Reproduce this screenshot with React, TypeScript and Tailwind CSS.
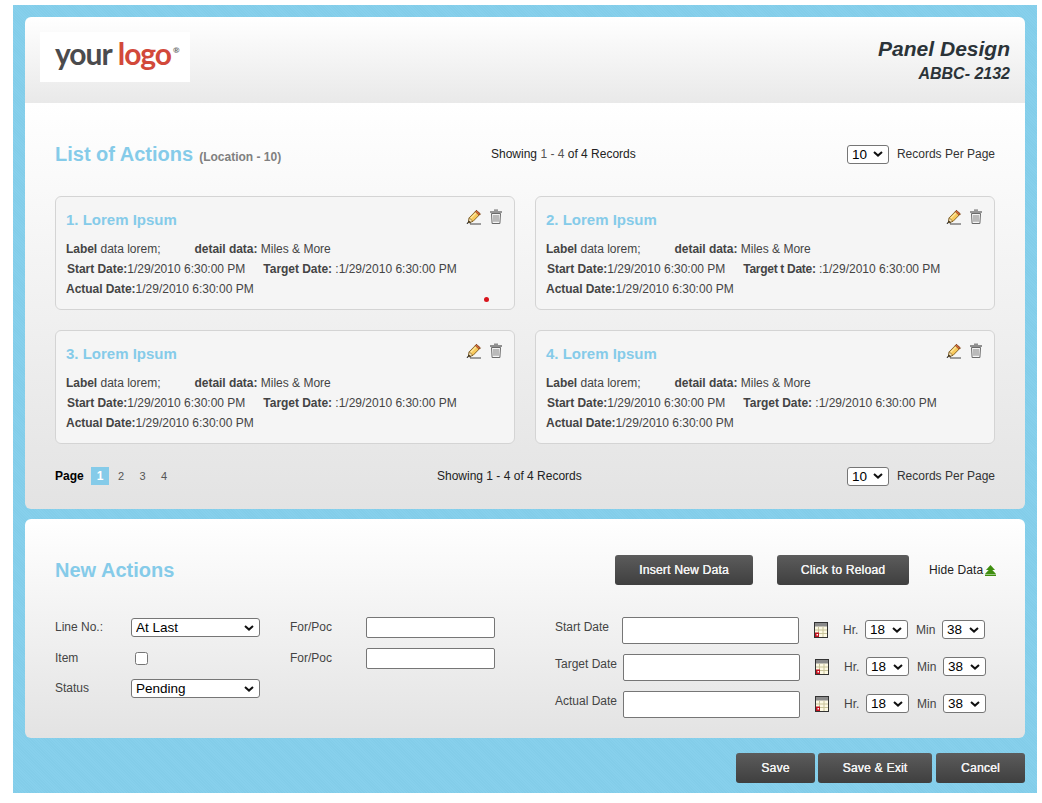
import React from "react";

const Pencil = () => (
  <svg width="16" height="16" viewBox="0 0 16 16" className="block">
    <path d="M4 15H15" stroke="#444" strokeWidth="1" fill="none" />
    <path d="M1 14.6c.8-1.2 2.6-1.6 3.6-.4" stroke="#111" strokeWidth="1.2" fill="none" />
    <path d="M3.2 8.8 10.4 1.4l3.9 3.5-7.3 7.5-4.6 1.1z" fill="#f8c95c" stroke="#6b4a12" strokeWidth="0.8" strokeLinejoin="round" />
    <path d="M4.4 9.6 11.6 2.4" stroke="#fbe7a6" strokeWidth="1.2" fill="none" />
    <path d="M10.4 1.4l3.9 3.5-1.3 1.3-3.8-3.6z" fill="#d9663a" stroke="#6b2f12" strokeWidth="0.6" />
    <path d="M3.2 8.8l3.8 3.6-4.6 1.1z" fill="#f7e2b5" stroke="#6b4a12" strokeWidth="0.6" />
    <path d="M2.2 13.6l.5-2 1.5 1.5z" fill="#111" />
  </svg>
);

const Trash = () => (
  <svg width="14" height="15" viewBox="0 0 14 15" className="block">
    <path d="M5 1.2h4" stroke="#777" strokeWidth="1.2" fill="none" />
    <path d="M1 3h12" stroke="#777" strokeWidth="1.6" fill="none" />
    <path d="M2.5 4.5h9l-.6 10H3.1z" fill="#f4f4f4" stroke="#6a6a6a" strokeWidth="1" strokeLinejoin="round" />
    <path d="M5 6v6.8M7 6v6.8M9 6v6.8" stroke="#808080" strokeWidth="1" fill="none" />
  </svg>
);

const Calendar = () => (
  <svg width="14" height="16" viewBox="0 0 14 16" className="block">
    <rect x="0.5" y="0.5" width="13" height="15" fill="#fdf9e3" stroke="#333" />
    <rect x="1" y="1" width="12" height="3.5" fill="#8a8a8a" />
    <path d="M4.5 5v10M9 5v10M1 8h12M1 11.5h12" stroke="#c9c49a" strokeWidth="1" fill="none" />
    <rect x="1" y="10.5" width="4" height="4.5" fill="#c1121f" />
    <rect x="2.5" y="12" width="1.5" height="1.5" fill="#fff" />
  </svg>
);

const Select = ({ value, className }: { value: string; className: string }) => (
  <span className={`relative block ${className}`}>
    <select
      defaultValue={value}
      className="block w-full h-full appearance-none border border-[#767676] rounded-[3px] bg-white text-[13.5px] leading-[17px] py-0 text-black pl-[4px]"
    >
      <option>{value}</option>
    </select>
    <svg width="10" height="6" viewBox="0 0 10 6" className="absolute right-[6px] top-1/2 -mt-[3px] pointer-events-none">
      <path d="M1 1l4 3.6L9 1" stroke="#111" strokeWidth="2" fill="none" />
    </svg>
  </span>
);

const Btn = ({ children, className }: { children: React.ReactNode; className: string }) => (
  <button className={`h-[30px] rounded-[3px] bg-gradient-to-b from-[#5c5c5c] to-[#3f3f3f] text-[#f2f2f2] text-[12px] tracking-[0.25px] [text-shadow:0.3px_0_0_#fff] text-center ${className}`}>
    {children}
  </button>
);

const PerPage = () => (
  <div className="flex items-center ml-auto">
    <Select value="10" className="w-[42px] h-[19px]" />
    <span className="ml-[8px] text-[12px] text-[#333]">Records Per Page</span>
  </div>
);

type CardData = { n: number; target: React.ReactNode };

const B = ({ children, className = "" }: { children: React.ReactNode; className?: string }) => (
  <b className={`tracking-[-0.04px] ${className}`}>{children}</b>
);

const Card = ({ d, dot }: { d: CardData; dot?: boolean }) => (
  <div className="relative h-[114px] rounded-[6px] border border-[#d4d4d4] bg-[#f5f5f5] px-[10px] pt-[14px]">
    <div className="flex justify-between h-[18px]">
      <h3 className="text-[15px] leading-[18px] font-bold text-[#85cbe9]">{d.n}. Lorem Ipsum</h3>
      <div className="flex gap-[7px] -mt-[2px] mr-[1px]">
        <Pencil />
        <Trash />
      </div>
    </div>
    <div className="mt-[10px] text-[12px] leading-[20px] text-[#444] whitespace-nowrap">
      <div>
        <B>Label</B> data lorem;<B className="ml-[34px]">detail data:</B> Miles &amp; More
      </div>
      <div className="ml-[1px]">
        <B>Start Date:</B>1/29/2010 6:30:00 PM<span className="ml-[18px]">{d.target}</span> :1/29/2010 6:30:00 PM
      </div>
      <div>
        <B>Actual Date:</B>1/29/2010 6:30:00 PM
      </div>
    </div>
    {dot && <span className="absolute left-[428px] top-[100px] w-[5px] h-[5px] rounded-full bg-[#d8141c]" />}
  </div>
);

const cards: CardData[] = [
  { n: 1, target: <B>Target Date:</B> },
  { n: 2, target: <b className="tracking-[-0.3px]">Target t Date:</b> },
  { n: 3, target: <B>Target Date:</B> },
  { n: 4, target: <B>Target Date:</B> },
];

const DateRow = ({ label, inputMl }: { label: string; inputMl: string }) => (
  <div className="flex items-center h-[27px]">
    <span className="w-[67px] text-[12px] text-[#444] -mt-[8px] whitespace-nowrap">{label}</span>
    <input className={`w-[177px] h-[27px] border border-[#767676] rounded-[2px] bg-white ${inputMl}`} />
    <span className="ml-[15px] -mt-[2px]">
      <Calendar />
    </span>
    <span className="ml-[15px] w-[22px] text-[12px] text-[#444] -mt-[2px]">Hr.</span>
    <Select value="18" className="w-[43px] h-[19px] -mt-[2px]" />
    <span className="ml-[8px] w-[26px] text-[12px] text-[#444] -mt-[2px]">Min</span>
    <Select value="38" className="w-[43px] h-[19px] -mt-[2px]" />
  </div>
);

const Label = ({ children }: { children: React.ReactNode }) => (
  <span className="text-[12px] text-[#444] -mt-[1px]">{children}</span>
);

export default function App() {
  return (
    <div className="w-[1042px] h-[803px] bg-white pt-[5px] pl-[13px] font-['Liberation_Sans',Arial,sans-serif] overflow-hidden">
      <div className="w-[1024px] h-[788px] p-[12px] bg-[#85cfeb] bg-[repeating-linear-gradient(45deg,#83cde9_0px,#83cde9_1px,#87d0ec_1px,#87d0ec_2px)]">
        {/* Panel 1 */}
        <section className="h-[492px] rounded-[6px] overflow-hidden">
          <header className="h-[86px] flex justify-between pl-[15px] pr-[15px] pt-[15px] bg-gradient-to-b from-white to-[#e9e9e9]">
            <div className="w-[150px] h-[50px] bg-white flex items-center pl-[15px] pb-[9px] font-['Lato',sans-serif] font-bold text-[30px] tracking-[-1px] leading-none">
              <span className="text-[#4b4b4d]">your</span>
              <span className="text-[#d2493a] ml-[6px]">logo</span>
              <span className="text-[8px] text-[#666] self-start mt-[14px] ml-[2px]">®</span>
            </div>
            <div className="text-right text-[#2b3338] italic font-bold">
              <div className="text-[21px] leading-[24px] mt-[5px]">Panel Design</div>
              <div className="text-[16px] leading-[20px] mt-[3px]">ABBC- 2132</div>
            </div>
          </header>
          <div className="h-[406px] px-[30px] bg-gradient-to-b from-white to-[#e3e3e3] pt-[41px]">
            <div className="flex items-center h-[20px]">
              <div className="w-[436px] whitespace-nowrap">
                <span className="text-[20px] font-bold text-[#85cbe9]">List of Actions</span>
                <span className="ml-[6px] text-[12px] font-bold text-[#808080]">(Location - 10)</span>
              </div>
              <span className="text-[12px] text-[#222]">
                Showing <span className="text-[#555]">1 - 4</span> of 4 Records
              </span>
              <PerPage />
            </div>
            <div className="grid grid-cols-2 gap-[20px] mt-[32px]">
              {cards.map((c) => (
                <Card key={c.n} d={c} dot={c.n === 1} />
              ))}
            </div>
            <div className="flex items-center h-[20px] mt-[22px]">
              <div className="w-[382px] flex items-center text-[12px]">
                <b className="text-black w-[36px]">Page</b>
                <span className="w-[18px] h-[18px] flex items-center justify-center bg-[#85cbe9] text-white font-bold">1</span>
                <span className="ml-[9px] w-[12.5px] text-[#555] text-[11px]">2</span>
                <span className="ml-[9px] w-[12.5px] text-[#555] text-[11px]">3</span>
                <span className="ml-[9px] w-[12.5px] text-[#555] text-[11px]">4</span>
              </div>
              <span className="text-[12px] text-[#222]">Showing 1 - 4 of 4 Records</span>
              <PerPage />
            </div>
          </div>
        </section>

        {/* Panel 2 */}
        <section className="h-[219px] mt-[10px] rounded-[6px] overflow-hidden bg-gradient-to-b from-white to-[#e3e3e3] px-[30px]">
          <div className="flex items-center h-[30px] mt-[36px]">
            <h2 className="text-[20px] font-bold text-[#85cbe9] w-[560px] shrink-0">New Actions</h2>
            <Btn className="w-[138px] shrink-0">Insert New Data</Btn>
            <Btn className="w-[132px] ml-[24px] shrink-0">Click to Reload</Btn>
            <span className="ml-[20px] text-[12px] text-[#222] tracking-[0.1px] whitespace-nowrap flex items-center gap-[2px]">
              Hide Data
              <svg width="11" height="11" viewBox="0 0 11 11">
                <path d="M5.5 0 10 5H1z" fill="#3e8e0f" />
                <path d="M5.5 3 11 9H0z" fill="#3e8e0f" />
                <rect x="0" y="9.5" width="11" height="1.5" fill="#3e8e0f" />
              </svg>
            </span>
          </div>
          <div className="flex mt-[32px]">
            <div className="w-[500px] grid grid-cols-[76px_159px_76px_129px] grid-rows-[31px_31px_29px] items-center h-[91px] -mt-[5px]">
              <Label>Line No.:</Label>
              <Select value="At Last" className="w-[129px] h-[19px]" />
              <Label>For/Poc</Label>
              <input className="w-[129px] h-[21px] border border-[#767676] rounded-[2px] bg-white" />
              <Label>Item</Label>
              <input type="checkbox" className="ml-[4px] w-[13px] h-[13px]" />
              <Label>For/Poc</Label>
              <input className="w-[129px] h-[21px] border border-[#767676] rounded-[2px] bg-white" />
              <Label>Status</Label>
              <Select value="Pending" className="w-[129px] h-[19px]" />
            </div>
            <div className="flex flex-col gap-[10px]">
              <DateRow label="Start Date" inputMl="" />
              <DateRow label="Target Date" inputMl="ml-[1px]" />
              <DateRow label="Actual Date" inputMl="ml-[1px]" />
            </div>
          </div>
        </section>

        {/* Footer */}
        <div className="flex justify-end gap-[3px] mt-[15px]">
          <Btn className="w-[79px]">Save</Btn>
          <Btn className="w-[114px]">Save &amp; Exit</Btn>
          <Btn className="w-[89px] ml-[1px]">Cancel</Btn>
        </div>
      </div>
    </div>
  );
}
